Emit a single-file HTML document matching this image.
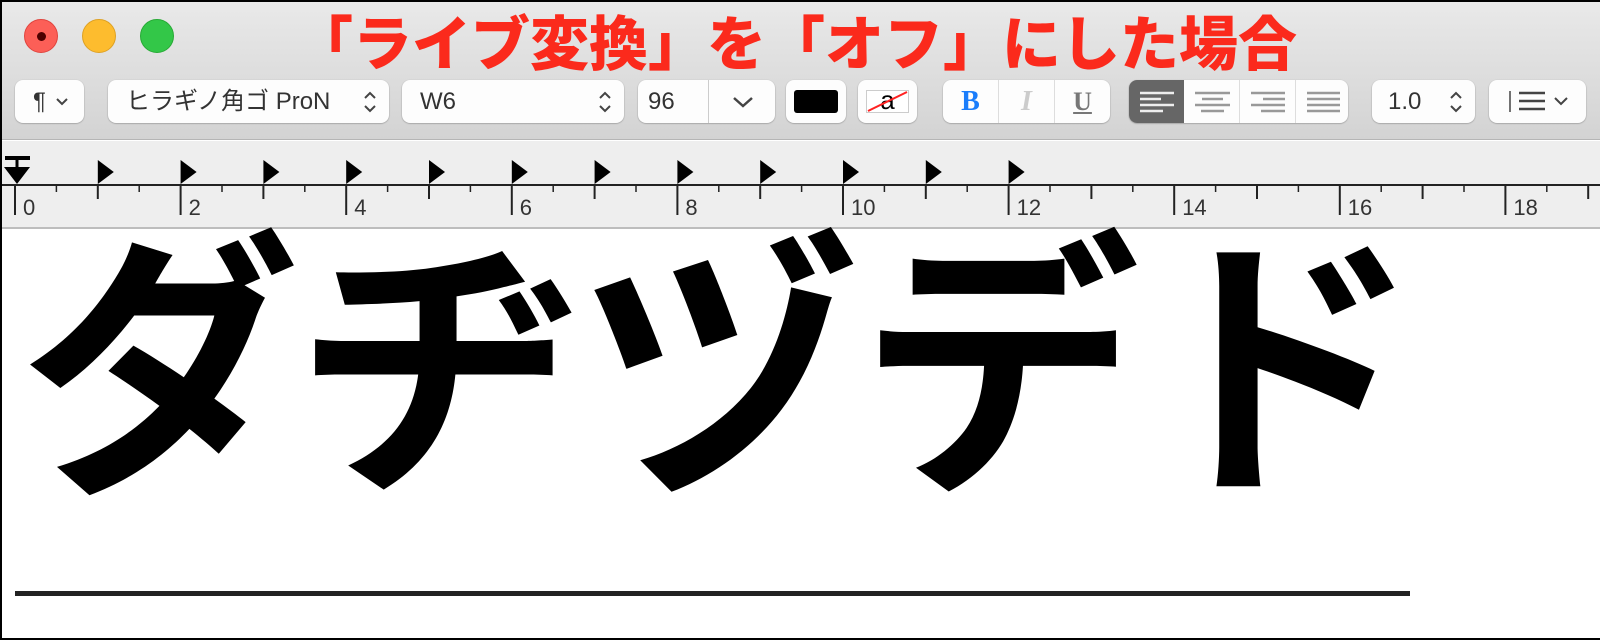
<!DOCTYPE html>
<html><head><meta charset="utf-8"><style>
*{margin:0;padding:0;box-sizing:border-box}
body{width:1600px;height:640px;background:#000;position:relative;overflow:hidden;font-family:"Liberation Sans","Noto Sans CJK JP",sans-serif}
#win{position:absolute;left:2px;top:2px;width:1598px;height:636px;background:#fff;overflow:hidden}
#top{position:absolute;left:0;top:0;width:100%;height:138px;background:linear-gradient(#e9e9e9,#d3d3d3);border-bottom:1px solid #b5b5b5}
.tl{position:absolute;top:17px;width:34px;height:34px;border-radius:50%}
#title{position:absolute;left:292px;top:-5px;font-family:"Noto Sans CJK JP",sans-serif;font-weight:900;font-size:59px;color:#fb2a1c;white-space:nowrap}
.b{position:absolute;top:78px;height:43px;background:#fdfdfd;border-radius:8px;box-shadow:0 0.5px 1.5px rgba(0,0,0,.35);font-size:24px;color:#333;line-height:43px}
.ud{position:absolute;top:10px}
#ruler{position:absolute;left:0;top:139px;width:100%;height:88px;background:#eee;border-bottom:2px solid #bdbdbd}
#text{position:absolute;left:18px;top:206px;font-family:"Noto Sans CJK JP",sans-serif;font-weight:700;font-size:280px;line-height:280px;white-space:nowrap;color:#000}
#ul{position:absolute;left:13px;top:589px;width:1395px;height:5px;background:#222}
</style></head><body><div id="win">
<div id="top">
<div class="tl" style="left:22px;background:#fc5f57;border:1px solid #e0443e"><div style="position:absolute;left:12px;top:12px;width:9px;height:9px;border-radius:50%;background:#4d0000"></div></div>
<div class="tl" style="left:80px;background:#fdbc2e;border:1px solid #dea123"></div>
<div class="tl" style="left:138px;background:#33c748;border:1px solid #27aa35"></div>
<div id="title">「ライブ変換」を「オフ」にした場合</div>

<div class="b" style="left:13px;width:69px;padding-left:18px">¶<svg style="position:absolute;left:40px;top:17px" width="14" height="10"><polyline points="2,2 7,7 12,2" fill="none" stroke="#444" stroke-width="2"/></svg></div>
<div class="b" style="left:106px;width:281px;padding-left:18px;color:#333">ヒラギノ角ゴ ProN<svg class="ud" style="right:12px" width="14" height="24"><polyline points="2,8 7,3 12,8" fill="none" stroke="#444" stroke-width="2"/><polyline points="2,16 7,21 12,16" fill="none" stroke="#444" stroke-width="2"/></svg></div>
<div class="b" style="left:400px;width:222px;padding-left:18px">W6<svg class="ud" style="right:12px" width="14" height="24"><polyline points="2,8 7,3 12,8" fill="none" stroke="#444" stroke-width="2"/><polyline points="2,16 7,21 12,16" fill="none" stroke="#444" stroke-width="2"/></svg></div>
<div class="b" style="left:636px;width:137px;padding-left:10px">96<div style="position:absolute;left:70px;top:0;width:1px;height:43px;background:#ccc"></div><svg style="position:absolute;left:94px;top:16px" width="22" height="12"><polyline points="2,2 11,10 20,2" fill="none" stroke="#444" stroke-width="2.5"/></svg></div>
<div class="b" style="left:784px;width:60px"><div style="position:absolute;left:8px;top:10px;width:44px;height:23px;background:#000;border-radius:3px"></div></div>
<div class="b" style="left:856px;width:59px"><div style="position:absolute;left:8px;top:10px;width:43px;height:23px;background:#fff;border:1px solid #ccc;text-align:center;line-height:19px;font-size:26px;color:#000">a</div><svg style="position:absolute;left:8px;top:10px" width="43" height="23"><line x1="2" y1="21" x2="41" y2="2" stroke="#f22" stroke-width="2"/></svg></div>
<div class="b" style="left:941px;width:167px;font-family:'Liberation Serif',serif;font-weight:bold">
<span style="position:absolute;left:0;width:55px;text-align:center;color:#1a7dfb;font-size:28px">B</span>
<div style="position:absolute;left:55px;top:0;width:1px;height:43px;background:#ddd"></div>
<span style="position:absolute;left:56px;width:55px;text-align:center;color:#ccc;font-style:italic;font-size:28px">I</span>
<div style="position:absolute;left:111px;top:0;width:1px;height:43px;background:#ddd"></div>
<span style="position:absolute;left:112px;width:55px;text-align:center;color:#777;text-decoration:underline;font-size:26px">U</span></div>
<div class="b" style="left:1127px;width:219px;overflow:hidden">
<svg width="219" height="43" style="position:absolute;left:0;top:0">
<rect x="0" y="0" width="55" height="43" fill="#666"/>
<g stroke="#eee" stroke-width="2.5"><line x1="11" y1="13" x2="45" y2="13"/><line x1="11" y1="19" x2="32" y2="19"/><line x1="11" y1="25" x2="45" y2="25"/><line x1="11" y1="31" x2="34" y2="31"/></g>
<g stroke="#999" stroke-width="2.5"><line x1="66" y1="13" x2="101" y2="13"/><line x1="73" y1="19" x2="94" y2="19"/><line x1="66" y1="25" x2="101" y2="25"/><line x1="72" y1="31" x2="95" y2="31"/>
<line x1="122" y1="13" x2="156" y2="13"/><line x1="134" y1="19" x2="156" y2="19"/><line x1="122" y1="25" x2="156" y2="25"/><line x1="132" y1="31" x2="156" y2="31"/>
<line x1="178" y1="13" x2="211" y2="13"/><line x1="178" y1="19" x2="211" y2="19"/><line x1="178" y1="25" x2="211" y2="25"/><line x1="178" y1="31" x2="211" y2="31"/></g>
<g stroke="#ddd"><line x1="110.5" y1="0" x2="110.5" y2="43"/><line x1="166.5" y1="0" x2="166.5" y2="43"/></g></svg></div>
<div class="b" style="left:1370px;width:103px;padding-left:16px">1.0<svg class="ud" style="right:12px" width="14" height="24"><polyline points="2,8 7,3 12,8" fill="none" stroke="#444" stroke-width="2"/><polyline points="2,16 7,21 12,16" fill="none" stroke="#444" stroke-width="2"/></svg></div>
<div class="b" style="left:1487px;width:97px"><svg width="97" height="43" style="position:absolute;left:0;top:0"><g stroke="#444" stroke-width="2.5"><line x1="30" y1="13" x2="56" y2="13"/><line x1="30" y1="21" x2="56" y2="21"/><line x1="30" y1="29" x2="56" y2="29"/><line x1="21" y1="11" x2="21" y2="32" stroke-width="1.5"/></g><polyline points="66,18 72,24 78,18" fill="none" stroke="#444" stroke-width="2"/></svg></div>
</div>
<div id="ruler"><svg width="1598" height="88" style="position:absolute;left:0;top:0" id="rs"></svg></div>
<div id="text">ダヂヅデド</div>
<div id="ul"></div>
</div>
<script>
(function(){var s='',y=44;s+='<line x1="0" y1="'+y+'" x2="1598" y2="'+y+'" stroke="#222" stroke-width="2"/>';
var sp=165.6;for(var i=0;i<10;i++){var x=13+i*sp;s+='<line x1="'+x+'" y1="'+y+'" x2="'+x+'" y2="74" stroke="#222" stroke-width="2"/>';
s+='<text x="'+(x+8)+'" y="74" font-family="Liberation Sans" font-size="22" fill="#333">'+(i*2)+'</text>';
s+='<line x1="'+(x+sp/2)+'" y1="'+y+'" x2="'+(x+sp/2)+'" y2="58" stroke="#222" stroke-width="2"/>';
s+='<line x1="'+(x+sp/4)+'" y1="'+y+'" x2="'+(x+sp/4)+'" y2="51" stroke="#222" stroke-width="1.5"/>';
s+='<line x1="'+(x+3*sp/4)+'" y1="'+y+'" x2="'+(x+3*sp/4)+'" y2="51" stroke="#222" stroke-width="1.5"/>';}
for(var j=1;j<=12;j++){var tx=13+j*sp/2;s+='<polygon points="'+tx+',19 '+(tx+16)+',31 '+tx+',43" fill="#000"/>';}
s+='<rect x="3" y="15" width="25" height="4" fill="#000"/><line x1="15" y1="15" x2="15" y2="26" stroke="#000" stroke-width="3"/><polygon points="2,26 28,26 15,43" fill="#000"/>';
document.getElementById('rs').innerHTML=s;})();
</script>
</body></html>
